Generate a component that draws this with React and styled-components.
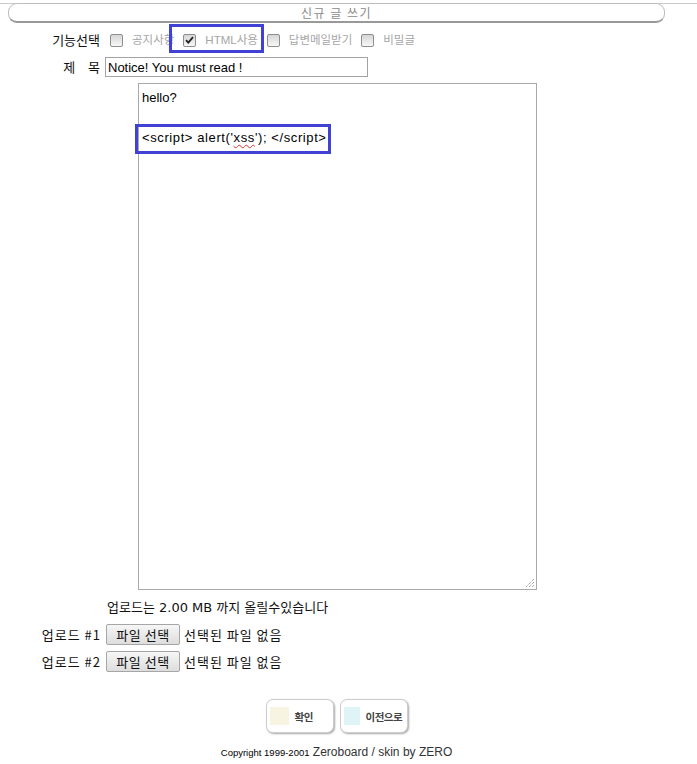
import React from 'react';
import styled, { createGlobalStyle } from 'styled-components';

const GlobalStyle = createGlobalStyle`
  body {
    margin: 0;
    background: #fff;
    font-family: "Liberation Sans", "Noto Sans CJK KR", sans-serif;
    color: #000;
  }
`;

const options = [
  { label: '공지사항', checked: false },
  { label: 'HTML사용', checked: true, marked: true },
  { label: '답변메일받기', checked: false },
  { label: '비밀글', checked: false },
];

const App = () => {
  return (
    <>
      <GlobalStyle />
      <Header>
        <TitleBar>신규 글 쓰기</TitleBar>
      </Header>
      <Page>
        <Row $h={28}>
          <Label>기능선택</Label>
          <Options>
            {options.map((o) => (
              <Option key={o.label} $marked={o.marked}>
                <Box>
                  {o.checked && (
                    <svg width="9" height="8" viewBox="0 0 9 8">
                      <path d="M1 4.2 L3.3 6.6 L8 1.2" fill="none" stroke="#222" strokeWidth="1.8" />
                    </svg>
                  )}
                </Box>
                <OptionText>{o.label}</OptionText>
              </Option>
            ))}
          </Options>
        </Row>
        <Row $h={26}>
          <Label $spaced>제 목</Label>
          <SubjectInput value="Notice! You must read !" readOnly />
        </Row>
        <Row $h={510} $top>
          <span />
          <Editor>
            <Line>hello?</Line>
            <Line />
            <Line>
              <Marked>
                &lt;script&gt; alert('<Misspelled>xss</Misspelled>'); &lt;/script&gt;
              </Marked>
            </Line>
            <Grip>
              <svg width="10" height="10" viewBox="0 0 10 10">
                <path d="M9 1 L1 9 M9 4 L4 9 M9 7 L7 9" stroke="#777" strokeWidth="1" strokeDasharray="1 1" fill="none" />
              </svg>
            </Grip>
          </Editor>
        </Row>
        <Row $h={27} $gap={4}>
          <span />
          <Notice>업로드는 2.00 MB 까지 올릴수있습니다</Notice>
        </Row>
        {[1, 2].map((n) => (
          <Row $h={27} key={n}>
            <Label $wide>업로드 #{n}</Label>
            <FileField>
              <FileButton type="button">파일 선택</FileButton>
              <FileName>선택된 파일 없음</FileName>
            </FileField>
          </Row>
        ))}
        <Actions>
          <ActionButton type="button">
            <Swatch $color="#f7f5e1" $w={19} />
            확인
          </ActionButton>
          <ActionButton type="button">
            <Swatch $color="#dff4f7" $w={16} />
            이전으로
          </ActionButton>
        </Actions>
        <Copyright>
          <Small>Copyright 1999-2001</Small> Zeroboard / skin by ZERO
        </Copyright>
      </Page>
    </>
  );
};

export default App;

const Header = styled.div`
  margin-top: 3px;
  border-top: 1px solid #cacaca;
`;

const TitleBar = styled.div`
  box-sizing: border-box;
  height: 20px;
  margin: -1px 32px 0 8px;
  border: 1px solid #bdbdbd;
  border-bottom: 2px solid #999;
  border-radius: 9px;
  background: #fff;
  display: flex;
  align-items: center;
  justify-content: center;
  font: 12px "Noto Sans CJK KR", sans-serif;
  color: #8c8c8c;
  letter-spacing: 1.5px;
`;

const Page = styled.div`
  width: 657px;
  margin-left: 8px;
  padding-top: 3px;
`;

const Row = styled.div`
  display: grid;
  grid-template-columns: 92px 1fr;
  column-gap: 5px;
  height: ${(p) => p.$h}px;
  margin-top: ${(p) => p.$gap || 0}px;
  align-items: ${(p) => (p.$top ? 'end' : 'center')};
`;

const Label = styled.span`
  text-align: right;
  font: 13px "Noto Sans CJK KR", sans-serif;
  line-height: 16px;
  color: #111;
  letter-spacing: ${(p) => (p.$wide ? '1px' : '0')};
  word-spacing: ${(p) => (p.$spaced ? '10px' : '0')};
  margin-right: ${(p) => (p.$wide ? '-1px' : '0')};
`;

const Options = styled.div`
  display: flex;
  align-items: center;
  gap: 9px;
  padding-left: 5px;
`;

const Option = styled.span`
  position: relative;
  display: inline-flex;
  align-items: center;
  gap: 9px;
  height: 14px;
  &::after {
    content: '';
    display: ${(p) => (p.$marked ? 'block' : 'none')};
    position: absolute;
    top: -9px;
    left: -14px;
    right: -6px;
    bottom: -6px;
    border: 3px solid #4141d3;
  }
`;

const Box = styled.span`
  box-sizing: border-box;
  width: 13px;
  height: 13px;
  border: 1px solid #8e8e8e;
  border-radius: 2px;
  background: linear-gradient(#d6d6d6, #f7f7f7);
  display: inline-flex;
  align-items: center;
  justify-content: center;
`;

const OptionText = styled.span`
  font: 11.5px "Liberation Sans", "Noto Sans CJK KR", sans-serif;
  line-height: 14px;
  color: #a6a6a6;
`;

const SubjectInput = styled.input`
  box-sizing: border-box;
  width: 263px;
  height: 20px;
  margin: 0;
  padding: 0 2px;
  border: 1px solid #a3a3a3;
  font: 13px "Liberation Sans", sans-serif;
  color: #000;
  outline: none;
`;

const Editor = styled.div`
  position: relative;
  box-sizing: border-box;
  width: 399px;
  height: 507px;
  margin-left: 33px;
  padding: 4px 3px;
  border: 1px solid #a9a9a9;
  background: #fff;
  font: 13px "Liberation Sans", sans-serif;
  line-height: 20px;
`;

const Line = styled.div`
  height: 20px;
  white-space: pre;
`;

const Marked = styled.span`
  position: relative;
  display: inline-block;
  letter-spacing: 0.6px;
  &::after {
    content: '';
    position: absolute;
    top: -4px;
    left: -7px;
    right: -4px;
    bottom: -6px;
    border: 3px solid #4141d3;
  }
`;

const Misspelled = styled.span`
  text-decoration: underline wavy #e03030;
  text-decoration-thickness: 1px;
  text-underline-offset: 2px;
`;

const Grip = styled.span`
  position: absolute;
  right: 1px;
  bottom: 1px;
  width: 10px;
  height: 10px;
  display: flex;
`;

const Notice = styled.span`
  padding-left: 2px;
  font: 13px "DejaVu Sans", "Noto Sans CJK KR", sans-serif;
  line-height: 16px;
  color: #111;
`;

const FileField = styled.div`
  display: flex;
  align-items: center;
  gap: 4px;
`;

const FileButton = styled.button`
  box-sizing: border-box;
  width: 74px;
  height: 21px;
  margin: 0 0 0 1px;
  padding: 0;
  border: 1px solid #a6a6a6;
  border-radius: 2px;
  background: linear-gradient(#f6f6f6, #dddddd);
  font: 13px "Noto Sans CJK KR", sans-serif;
  line-height: 19px;
  letter-spacing: 0.5px;
  color: #111;
`;

const FileName = styled.span`
  font: 13px "Noto Sans CJK KR", sans-serif;
  line-height: 16px;
  letter-spacing: 1px;
  color: #111;
`;

const Actions = styled.div`
  display: flex;
  justify-content: center;
  gap: 6px;
  margin-top: 24px;
`;

const ActionButton = styled.button`
  box-sizing: border-box;
  width: 68px;
  height: 34px;
  padding: 0 0 0 3px;
  display: inline-flex;
  align-items: center;
  gap: 6px;
  border: 1px solid #cdcdcd;
  border-radius: 7px;
  background: #fff;
  box-shadow: 1px 1px 2px rgba(0, 0, 0, 0.35);
  font: bold 10.5px "Noto Sans CJK KR", sans-serif;
  color: #444;
  letter-spacing: -0.5px;
`;

const Swatch = styled.span`
  width: ${(p) => p.$w}px;
  height: 18px;
  background: ${(p) => p.$color};
`;

const Copyright = styled.div`
  margin-top: 12px;
  height: 16px;
  line-height: 16px;
  text-align: center;
  font: 12px "Liberation Sans", sans-serif;
  color: #333;
`;

const Small = styled.span`
  font: 9.5px "Liberation Sans", sans-serif;
  color: #000;
`;
